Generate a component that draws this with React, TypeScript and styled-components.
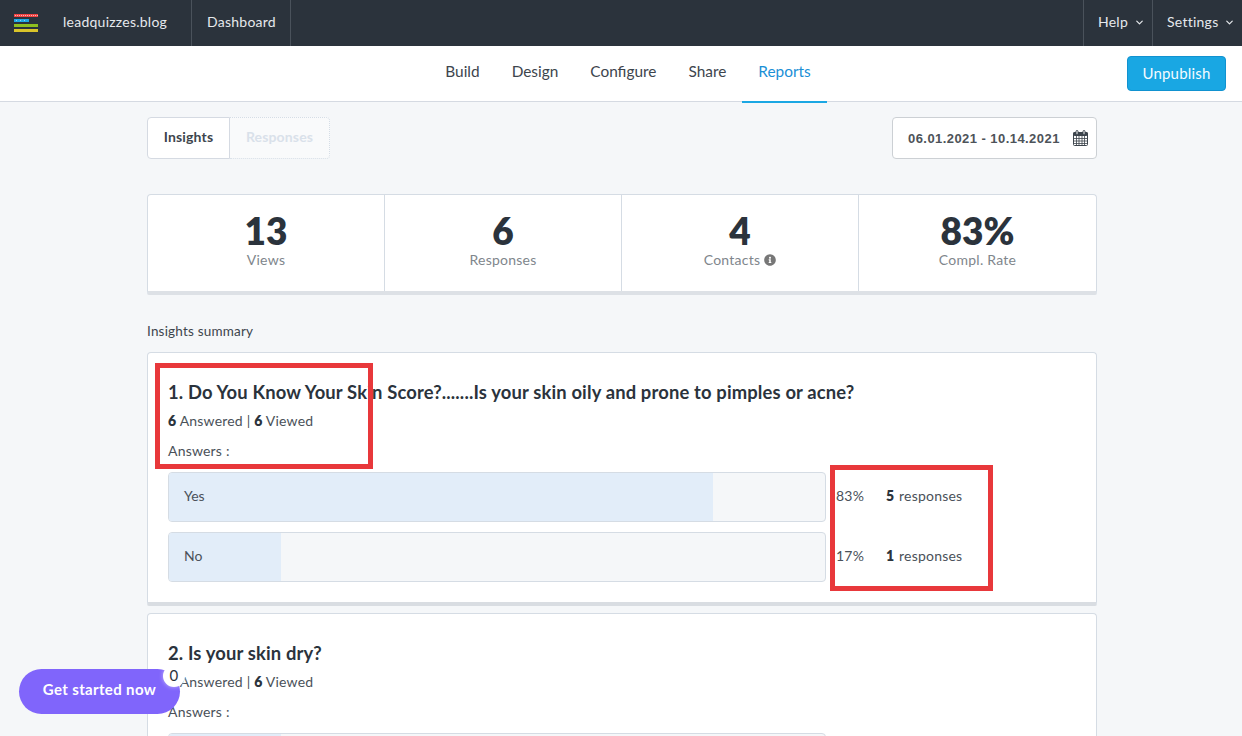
import React from "react";
import styled, { createGlobalStyle } from "styled-components";
import { FaInfoCircle } from "react-icons/fa";
import { FiChevronDown } from "react-icons/fi";

const Global = createGlobalStyle`
  html, body { margin: 0; padding: 0; height: 736px; overflow: hidden; background: #f5f7f9; }
  * { box-sizing: border-box; }
  body { font-family: "Lato", "Open Sans", sans-serif; color: #2b333c; }
`;

const Page = styled.div`
  position: relative;
  width: 1242px;
  height: 736px;
  overflow: hidden;
`;

const TopBar = styled.header`
  height: 46px;
  background: #2b333c;
  display: flex;
  align-items: stretch;
  color: #e6e9ec;
  font-size: 14px;
  letter-spacing: 0.25px;
`;

const LogoCell = styled.div`
  width: 63px;
  display: flex;
  align-items: center;
  padding-left: 14px;
`;

const BarItem = styled.div<{ $w: number; $pad?: number; $border?: boolean }>`
  width: ${(p) => p.$w}px;
  padding: 0 0 3px ${(p) => p.$pad ?? 0}px;
  display: flex;
  align-items: center;
  gap: 6px;
  border-right: ${(p) => (p.$border ? "1px solid #4a525b" : "none")};
  svg { stroke-width: 2.6; margin-top: 1px; }
`;

const Spacer = styled.div`
  flex: 1;
  border-right: 1px solid #4a525b;
`;

const SubBar = styled.nav`
  position: relative;
  height: 56px;
  background: #fff;
  border-bottom: 1px solid #d5dae2;
  display: flex;
  justify-content: center;
  padding-left: 14px;
`;

const Tab = styled.div<{ $active?: boolean }>`
  height: 57px;
  padding: 0 16px 6px;
  display: flex;
  align-items: center;
  font-size: 15.4px;
  color: ${(p) => (p.$active ? "#1b8fd6" : "#3d454d")};
  border-bottom: 2px solid ${(p) => (p.$active ? "#1ba7e3" : "transparent")};
`;

const Publish = styled.button`
  position: absolute;
  right: 16px;
  top: 10px;
  width: 99px;
  height: 35px;
  padding: 0 0 2px;
  background: #19a7e3;
  border: 1px solid #1192d0;
  border-radius: 4px;
  color: #f3fbff;
  font: inherit;
  font-size: 15px;
  letter-spacing: 0.2px;
`;

const Content = styled.main`
  width: 950px;
  margin-left: 147px;
  padding-top: 15px;
`;

const ToolRow = styled.div`
  display: flex;
  justify-content: space-between;
  height: 42px;
`;

const Toggle = styled.div`
  display: flex;
`;

const ToggleOn = styled.div`
  width: 83px;
  padding-bottom: 4px;
  background: #fff;
  border: 1px solid #d5dae2;
  border-radius: 4px 0 0 4px;
  display: flex;
  align-items: center;
  justify-content: center;
  font-size: 14px;
  font-weight: 700;
  letter-spacing: 0.15px;
  color: #3d454d;
`;

const ToggleOff = styled.div`
  width: 100px;
  padding-bottom: 4px;
  background: #f9fafb;
  border: 1px dotted #d5dde6;
  border-left: none;
  border-radius: 0 4px 4px 0;
  display: flex;
  align-items: center;
  justify-content: center;
  font-size: 14px;
  font-weight: 700;
  letter-spacing: 0.15px;
  color: #d9e1ea;
`;

const DateBox = styled.div`
  width: 205px;
  background: #fff;
  border: 1px solid #ccd0d4;
  border-radius: 4px;
  display: flex;
  align-items: center;
  justify-content: space-between;
  padding: 0 8px 0 15px;
  font-family: "Liberation Sans", sans-serif;
  font-size: 13px;
  font-weight: 700;
  color: #4d5359;
  letter-spacing: 0.44px;
`;

const Stats = styled.section`
  margin-top: 35px;
  height: 101px;
  display: grid;
  grid-template-columns: repeat(4, 1fr);
  background: #fff;
  border: 1px solid #d5dce4;
  border-bottom: 4px solid #dde1e6;
  border-radius: 4px 4px 2px 2px;
`;

const Stat = styled.div`
  display: flex;
  flex-direction: column;
  align-items: center;
  padding-top: 14px;
  border-right: 1px solid #d5dce4;
  &:last-child { border-right: none; }
`;

const StatValue = styled.div`
  font-size: 37px;
  font-weight: 800;
  line-height: 44px;
  color: #2b333c;
`;

const StatLabel = styled.div`
  margin-top: -2px;
  font-size: 14px;
  line-height: 18px;
  color: #80868c;
  display: flex;
  align-items: center;
  gap: 4px;
  letter-spacing: 0.25px;
`;

const SectionTitle = styled.div`
  margin: 27px 0 12px;
  font-size: 13.5px;
  line-height: 18px;
  color: #3d454d;
  letter-spacing: 0.2px;
`;

const Question = styled.article`
  margin-bottom: 7px;
  background: #fff;
  border: 1px solid #d5dce4;
  border-bottom: 4px solid #d9dde2;
  border-radius: 4px 4px 2px 2px;
  padding: 27px 20px 20px;
`;

const QTitle = styled.h2`
  margin: 0;
  font-size: 18.4px;
  font-weight: 700;
  line-height: 24px;
  color: #2b333c;
  letter-spacing: 0.15px;
`;

const Meta = styled.div`
  margin-top: 8px;
  font-size: 14px;
  line-height: 18px;
  color: #4a5159;
  letter-spacing: 0.2px;
  b { color: #2b333c; font-weight: 800; }
`;

const AnswersLabel = styled.div`
  margin-top: 12px;
  font-size: 14px;
  line-height: 18px;
  color: #4a5159;
  letter-spacing: 0.2px;
`;

const Answers = styled.div`
  margin-top: 12px;
  display: flex;
  flex-direction: column;
  gap: 10px;
`;

const AnswerRow = styled.div`
  display: flex;
  align-items: center;
`;

const Bar = styled.div`
  position: relative;
  width: 658px;
  height: 50px;
  background: #f5f7f9;
  border: 1px solid #d5dce4;
  border-radius: 4px;
  overflow: hidden;
  display: flex;
  align-items: center;
  padding: 0 0 4px 15px;
  font-size: 14px;
  color: #4a5159;
`;

const Fill = styled.div`
  position: absolute;
  left: 0;
  top: 0;
  bottom: 0;
  background: #e2edf9;
`;

const BarLabel = styled.span`
  position: relative;
`;

const Percent = styled.div`
  width: 60px;
  padding: 0 0 4px 10px;
  font-size: 14px;
  letter-spacing: 0.2px;
  color: #4a5159;
`;

const Count = styled.div`
  padding-bottom: 4px;
  font-size: 14px;
  color: #4a5159;
  letter-spacing: 0.2px;
  b { color: #2b333c; font-weight: 800; margin-right: 1px; }
`;

const RedBox = styled.div<{ $x: number; $y: number; $w: number; $h: number }>`
  position: absolute;
  left: ${(p) => p.$x}px;
  top: ${(p) => p.$y}px;
  width: ${(p) => p.$w}px;
  height: ${(p) => p.$h}px;
  border: 5px solid #e8383b;
`;

const StartButton = styled.div`
  position: absolute;
  left: 19px;
  top: 669px;
  width: 161px;
  height: 45px;
  padding-bottom: 5px;
  border-radius: 23px;
  background: #8065fb;
  color: #fff;
  font-size: 15px;
  font-weight: 700;
  display: flex;
  align-items: center;
  justify-content: center;
  letter-spacing: 0.35px;
`;

const Badge = styled.div`
  position: absolute;
  right: -5px;
  top: -4px;
  width: 22px;
  height: 22px;
  padding-bottom: 2px;
  border-radius: 50%;
  background: #fff;
  box-shadow: 0 0 4px rgba(255, 255, 255, 0.5);
  color: #2b333c;
  font-size: 15px;
  font-weight: 400;
  display: flex;
  align-items: center;
  justify-content: center;
`;

const Logo = () => (
  <svg width="24" height="18" viewBox="0 0 24 18">
    <rect x="0" y="0" width="24" height="3" fill="#ef4444" />
    <line x1="1" y1="1.5" x2="24" y2="1.5" stroke="#f9b4b4" strokeWidth="1" strokeDasharray="1 1" />
    <rect x="0" y="5" width="15" height="3" fill="#1ea7e4" />
    <line x1="2" y1="6.5" x2="14" y2="6.5" stroke="#8fd3f2" strokeWidth="1" strokeDasharray="1 3" />
    <rect x="0" y="10" width="24" height="3" fill="#8fbf1f" />
    <rect x="0" y="15" width="24" height="3" fill="#d9c42a" />
  </svg>
);

const CalendarIcon = () => (
  <svg width="15" height="16" viewBox="0 0 15 16" fill="none" stroke="#3d454d">
    <rect x="0.5" y="2.5" width="14" height="13" rx="1" />
    <rect x="0.5" y="2.5" width="14" height="3" rx="1" fill="#3d454d" />
    <path d="M0.5 8.5h14M0.5 11h14M0.5 13.5h14M3.5 5.5v10M6 5.5v10M9 5.5v10M11.5 5.5v10" strokeWidth="0.8" />
    <rect x="3" y="0.5" width="2" height="4" rx="1" fill="#fff" />
    <rect x="10" y="0.5" width="2" height="4" rx="1" fill="#fff" />
  </svg>
);

const answersQ1 = [
  { label: "Yes", pct: 83, n: 5 },
  { label: "No", pct: 17, n: 1 },
];

export default function App() {
  return (
    <Page>
      <Global />
      <TopBar>
        <LogoCell><Logo /></LogoCell>
        <BarItem $w={129} $border>leadquizzes.blog</BarItem>
        <BarItem $w={99} $pad={15} $border>Dashboard</BarItem>
        <Spacer />
        <BarItem $w={69} $pad={14} $border>Help <FiChevronDown size={11} /></BarItem>
        <BarItem $w={89} $pad={14}>Settings <FiChevronDown size={11} /></BarItem>
      </TopBar>
      <SubBar>
        <Tab>Build</Tab>
        <Tab>Design</Tab>
        <Tab>Configure</Tab>
        <Tab>Share</Tab>
        <Tab $active>Reports</Tab>
        <Publish>Unpublish</Publish>
      </SubBar>
      <Content>
        <ToolRow>
          <Toggle>
            <ToggleOn>Insights</ToggleOn>
            <ToggleOff>Responses</ToggleOff>
          </Toggle>
          <DateBox>06.01.2021 - 10.14.2021 <CalendarIcon /></DateBox>
        </ToolRow>
        <Stats>
          <Stat><StatValue>13</StatValue><StatLabel>Views</StatLabel></Stat>
          <Stat><StatValue>6</StatValue><StatLabel>Responses</StatLabel></Stat>
          <Stat><StatValue>4</StatValue><StatLabel>Contacts <FaInfoCircle size={12} color="#777" /></StatLabel></Stat>
          <Stat><StatValue>83%</StatValue><StatLabel>Compl. Rate</StatLabel></Stat>
        </Stats>
        <SectionTitle>Insights summary</SectionTitle>
        <Question>
          <QTitle>1. Do You Know Your Skin Score?.......Is your skin oily and prone to pimples or acne?</QTitle>
          <Meta><b>6</b> Answered | <b>6</b> Viewed</Meta>
          <AnswersLabel>Answers :</AnswersLabel>
          <Answers>
            {answersQ1.map((a) => (
              <AnswerRow key={a.label}>
                <Bar>
                  <Fill style={{ width: `${a.pct}%` }} />
                  <BarLabel>{a.label}</BarLabel>
                </Bar>
                <Percent>{a.pct}%</Percent>
                <Count><b>{a.n}</b> responses</Count>
              </AnswerRow>
            ))}
          </Answers>
        </Question>
        <Question>
          <QTitle>2. Is your skin dry?</QTitle>
          <Meta><b>6</b> Answered | <b>6</b> Viewed</Meta>
          <AnswersLabel>Answers :</AnswersLabel>
          <Answers>
            <AnswerRow>
              <Bar><Fill style={{ width: "17%" }} /></Bar>
            </AnswerRow>
          </Answers>
        </Question>
      </Content>
      <RedBox $x={155} $y={363} $w={218} $h={106} />
      <RedBox $x={830} $y={465} $w={163} $h={126} />
      <StartButton>
        Get started now
        <Badge>0</Badge>
      </StartButton>
    </Page>
  );
}
